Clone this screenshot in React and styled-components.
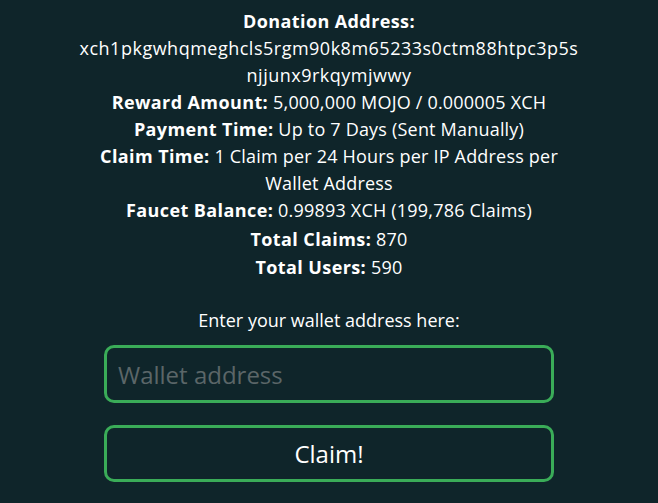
import React from "react";
import styled, { createGlobalStyle } from "styled-components";

const Global = createGlobalStyle`
  html, body { margin: 0; padding: 0; background: #0f252a; }
  body { font-family: "Open Sans", "Noto Sans", sans-serif; color: #ffffff; }
  * { box-sizing: border-box; }
`;

const Page = styled.div`
  width: 658px;
  min-height: 503px;
  background: #0f252a;
  display: flex;
  flex-direction: column;
  align-items: center;
  padding-top: 8px;
`;

const Info = styled.div`
  width: 500px;
  text-align: center;
  font-size: 18px;
  line-height: 27px;
  letter-spacing: 0.2px;
`;

const Line = styled.div`
  margin-top: ${(p) => p.$gap || 0}px;
`;

const Address = styled.div`
  word-break: break-all;
  letter-spacing: 0.5px;
`;

const Label = styled.span`
  font-weight: 700;
  letter-spacing: 0.4px;
`;

const Form = styled.div`
  width: 450px;
  margin-top: 26px;
  display: flex;
  flex-direction: column;
  align-items: stretch;
`;

const Prompt = styled.div`
  text-align: center;
  font-size: 18px;
  line-height: 27px;
  margin-bottom: 11px;
`;

const Input = styled.input`
  height: 58px;
  border: 3px solid #3aac58;
  border-radius: 10px;
  background: transparent;
  color: #fff;
  font-family: inherit;
  font-size: 24px;
  padding: 0 11px;
  outline: none;
  &::placeholder { color: #5b6668; }
`;

const Button = styled.button`
  margin-top: 22px;
  height: 57px;
  border: 3px solid #3aac58;
  border-radius: 10px;
  background: transparent;
  color: #fff;
  font-family: inherit;
  font-size: 24px;
  cursor: pointer;
`;

export default function App() {
  return (
    <Page>
      <Global />
      <Info>
        <Line><Label>Donation Address:</Label></Line>
        <Address>xch1pkgwhqmeghcls5rgm90k8m65233s0ctm88htpc3p5snjjunx9rkqymjwwy</Address>
        <Line><Label>Reward Amount:</Label> 5,000,000 MOJO / 0.000005 XCH</Line>
        <Line><Label>Payment Time:</Label> Up to 7 Days (Sent Manually)</Line>
        <Line><Label>Claim Time:</Label> 1 Claim per 24 Hours per IP Address per Wallet Address</Line>
        <Line><Label>Faucet Balance:</Label> 0.99893 XCH (199,786 Claims)</Line>
        <Line $gap={2}><Label>Total Claims:</Label> 870</Line>
        <Line $gap={1}><Label>Total Users:</Label> 590</Line>
      </Info>
      <Form>
        <Prompt>Enter your wallet address here:</Prompt>
        <Input placeholder="Wallet address" />
        <Button>Claim!</Button>
      </Form>
    </Page>
  );
}
